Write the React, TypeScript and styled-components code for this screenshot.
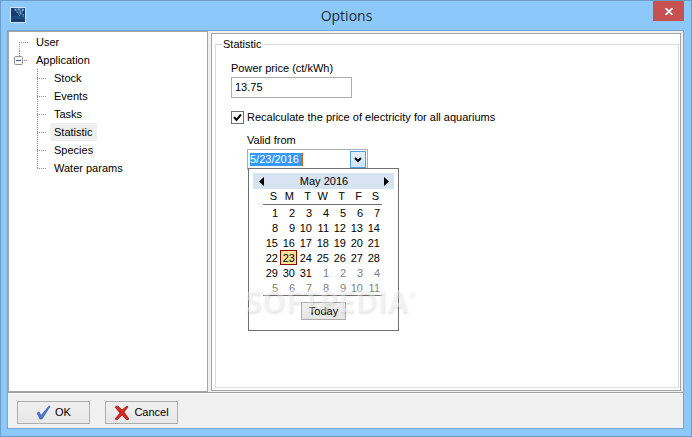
import React from "react";
import styled, { createGlobalStyle } from "styled-components";

const GlobalStyle = createGlobalStyle`
  * { box-sizing: border-box; }
  body { margin: 0; font-family: "Liberation Sans", Arial, sans-serif; font-size: 11px; line-height: 15px; color: #000; }
  button, input { font: inherit; color: inherit; }
`;

const Window = styled.div`
  display: flex;
  flex-direction: column;
  min-height: 100vh;
  padding: 0 7px 7px 6px;
  border: 1px solid #6c9cc8;
  background: #8cc8fa;
`;

const TitleBar = styled.header`
  display: flex;
  align-items: flex-start;
  height: 29px;
  padding-left: 3px;
`;

const AppIcon = styled.svg`
  flex: none;
  margin-top: 6px;
`;

const Title = styled.h1`
  flex: 1;
  margin: 5px 0 0 0;
  padding-left: 14px;
  text-align: center;
  color: #1c2833;
  font: 14px/20px "Open Sans", sans-serif;
`;

const CloseButton = styled.button`
  display: grid;
  place-items: center;
  width: 31px;
  height: 20px;
  padding: 0;
  border: 0;
  background: #c75050;
`;

const Client = styled.main`
  flex: 1;
  display: flex;
  flex-direction: column;
  border: 1px solid #78a6d4;
  background: #f0f0f0;
`;

const Panels = styled.div`
  flex: 1;
  display: flex;
  gap: 3px;
  border-bottom: 1px solid #a0a0a0;
`;

const TreePanel = styled.nav`
  flex: 0 0 200px;
  padding: 1px 0 0 5px;
  border: 1px solid #a5a5a5;
  background: #fff;
`;

const Tree = styled.ul`
  margin: 0;
  padding: 0;
  list-style: none;
`;

const SubTree = styled(Tree)`
  padding-left: 23px;
`;

const Node = styled.li``;

const NodeRow = styled.div`
  display: flex;
  align-items: center;
  height: 18px;
`;

const Lines = styled.svg`
  flex: none;
`;

const NodeLabel = styled.button<{ $selected?: boolean }>`
  height: 18px;
  padding: 0 4px;
  border: 0;
  background: ${(p) => (p.$selected ? "#f0f0f0" : "transparent")};
  line-height: 18px;
`;

const Content = styled.section`
  flex: 1;
  margin: 2px 2px 1px 0;
  padding: 3px 1px 2px 3px;
  display: flex;
  border: 1px solid #a5a5a5;
  background: #fff;
`;

const Group = styled.fieldset`
  flex: 1;
  min-width: 0;
  margin: 0;
  padding: 9px 15px 0;
  border: 1px solid #dcdcdc;
`;

const GroupTitle = styled.legend`
  margin-left: -8px;
  padding: 0;
`;

const Field = styled.div<{ $indent?: boolean }>`
  position: relative;
  display: flex;
  flex-direction: column;
  align-items: flex-start;
  gap: 1px;
  margin-left: ${(p) => (p.$indent ? "16px" : "0")};
`;

const TextInput = styled.input`
  width: 121px;
  height: 21px;
  padding: 0 3px 2px;
  border: 1px solid #abadb3;
  background: #fff;
`;

const CheckRow = styled.label`
  display: flex;
  align-items: center;
  gap: 3px;
  margin: 12px 0 8px;
`;

const CheckWrap = styled.span`
  position: relative;
  display: flex;
`;

const CheckBox = styled.input`
  appearance: none;
  width: 13px;
  height: 13px;
  margin: 0;
  border: 1px solid #707070;
  background: #fff;
`;

const CheckMark = styled.svg`
  position: absolute;
  inset: 0;
  pointer-events: none;
  display: none;
  ${CheckBox}:checked + & { display: block; }
`;

const DateBox = styled.div`
  display: flex;
  align-items: center;
  justify-content: space-between;
  width: 121px;
  height: 21px;
  padding: 0 1px 0 2px;
  border: 1px solid #abadb3;
  background: #fff;
`;

const DateInput = styled.input`
  width: 53px;
  height: 13px;
  padding: 0;
  border: 0;
  border-right: 1px solid #cc6600;
  background: #3399ff;
  color: #fff;
`;

const DropButton = styled.button`
  display: grid;
  place-items: center;
  width: 16px;
  height: 17px;
  padding: 0;
  border: 1px solid #569de5;
  background: linear-gradient(#e5f1fc, #cce4fc);
`;

const Calendar = styled.div`
  position: absolute;
  top: 35px;
  left: 1px;
  display: flex;
  flex-direction: column;
  align-items: center;
  width: 151px;
  padding: 4px 4px 10px;
  border: 1px solid #707070;
  background: #fff;
`;

const MonthBar = styled.div`
  display: flex;
  align-items: center;
  justify-content: space-between;
  width: 100%;
  height: 16px;
  padding: 0 5px 0 6px;
  background: #d8e3f1;
`;

const ArrowButton = styled.button`
  display: flex;
  padding: 0;
  border: 0;
  background: none;
`;

const Days = styled.table`
  border-collapse: separate;
  border-spacing: 0;
  table-layout: fixed;
  width: 119px;
  margin-right: 2px;
  border-bottom: 1px solid #707070;
`;

const Weekday = styled.th`
  height: 16px;
  padding: 0 3px 0 0;
  border-bottom: 1px solid #707070;
  font-weight: 400;
  text-align: right;
`;

const Day = styled.td<{ $muted?: boolean; $today?: boolean }>`
  height: 15px;
  padding: ${(p) => (p.$today ? "2px 1px 0 0" : "2px 2px 0 0")};
  border: ${(p) => (p.$today ? "1px solid #8b0000" : "0")};
  background: ${(p) => (p.$today ? "#ffe295" : "transparent")};
  color: ${(p) => (p.$muted ? "#808080" : "#000")};
  line-height: ${(p) => (p.$today ? "11px" : "13px")};
  text-align: right;
`;

const TodayButton = styled.button`
  width: 45px;
  height: 18px;
  margin-top: 6px;
  padding: 0;
  border: 1px solid #acacac;
  background: linear-gradient(#f0f0f0, #e5e5e5);
`;

const Watermark = styled.div`
  position: absolute;
  top: 114px;
  left: -4px;
  color: rgba(255, 255, 255, 0.4);
  font: 700 30px/36px "Open Sans", sans-serif;
  text-shadow: 1px 2px 2px rgba(0, 0, 0, 0.09);
  pointer-events: none;
`;

const Registered = styled.sup`
  font-size: 9px;
  line-height: 9px;
  vertical-align: 15px;
`;

const Footer = styled.footer`
  display: flex;
  gap: 15px;
  padding: 7px 9px 4px;
  border-top: 1px solid #fff;
`;

const ActionButton = styled.button`
  display: flex;
  align-items: center;
  justify-content: center;
  gap: 4px;
  width: 73px;
  height: 23px;
  padding: 0;
  border: 1px solid #acacac;
  background: linear-gradient(#f0f0f0, #e7e7e7);
`;

const pages = ["Stock", "Events", "Tasks", "Statistic", "Species", "Water params"];
const weekdays = ["S", "M", "T", "W", "T", "F", "S"];
const weeks = Array.from({ length: 6 }, (_, w) =>
  Array.from({ length: 7 }, (_, d) => w * 7 + d + 1)
);

function Arrow({ left }: { left?: boolean }) {
  return (
    <svg width="5" height="9" viewBox="0 0 5 9">
      <path d={left ? "M5 0v9L0 4.500z" : "M0 0v9l5-4.500z"} />
    </svg>
  );
}

export default function App() {
  return (
    <>
      <GlobalStyle />
      <Window>
        <TitleBar>
          <AppIcon width="16" height="16" viewBox="0 0 16 16">
            <path fill="#d0e4f7" d="M0 0h16v16H0z" />
            <path fill="#153e70" d="M1 1h14v14H1z" />
            <path fill="#1c4b82" d="M1 9h14v3H1z" />
            <path fill="#3a6798" d="M4 1h10v3H4zM6 4h7v2H6zM8 6h4v2H8zM12 7h2v3h-2z" />
            <path fill="#6f98c4" d="M5 2h1v2H5zM8 1h2v2H8zM12 2h2v2h-2zM7 5h1v1H7zM10 4h1v3h-1zM9 8h1v1H9zM13 7h1v1h-1z" />
          </AppIcon>
          <Title>Options</Title>
          <CloseButton aria-label="Close">
            <svg width="8" height="7" viewBox="0 0 8 7">
              <path d="M.5 0l7 7M7.500 0l-7 7" stroke="#fff" strokeWidth="1.700" />
            </svg>
          </CloseButton>
        </TitleBar>
        <Client>
          <Panels>
            <TreePanel aria-label="Option pages">
              <Tree>
                <Node>
                  <NodeRow>
                    <Lines width="18" height="18">
                      <path d="M5.500 9v9M5 9.500h9" stroke="#909090" strokeDasharray="1 1" fill="none" />
                    </Lines>
                    <NodeLabel>User</NodeLabel>
                  </NodeRow>
                </Node>
                <Node>
                  <NodeRow>
                    <Lines width="18" height="18">
                      <path d="M5.500 0v5M10 9.500h4" stroke="#909090" strokeDasharray="1 1" />
                      <rect x=".5" y="5.500" width="8" height="8" rx="1" fill="#f8f8f8" stroke="#919191" />
                      <path d="M2 9.500h5" stroke="#3b5fb5" />
                    </Lines>
                    <NodeLabel>Application</NodeLabel>
                  </NodeRow>
                  <SubTree>
                    {pages.map((page, i) => (
                      <Node key={page}>
                        <NodeRow>
                          <Lines width="13" height="18">
                            <path
                              d={i === pages.length - 1 ? "M.5 0v10M0 9.500h9" : "M.5 0v18M0 9.500h9"}
                              stroke="#909090"
                              strokeDasharray="1 1"
                              fill="none"
                            />
                          </Lines>
                          <NodeLabel $selected={page === "Statistic"}>{page}</NodeLabel>
                        </NodeRow>
                      </Node>
                    ))}
                  </SubTree>
                </Node>
              </Tree>
            </TreePanel>
            <Content>
              <Group>
                <GroupTitle>Statistic</GroupTitle>
                <Field>
                  <label htmlFor="price">Power price (ct/kWh)</label>
                  <TextInput id="price" defaultValue="13.75" />
                </Field>
                <CheckRow>
                  <CheckWrap>
                    <CheckBox type="checkbox" defaultChecked />
                    <CheckMark width="13" height="13" viewBox="0 0 13 13">
                      <path d="M3 6l2.500 3L10 3.500" fill="none" stroke="#000" strokeWidth="2" />
                    </CheckMark>
                  </CheckWrap>
                  Recalculate the price of electricity for all aquariums
                </CheckRow>
                <Field $indent>
                  <label htmlFor="valid">Valid from</label>
                  <DateBox>
                    <DateInput id="valid" defaultValue="5/23/2016" />
                    <DropButton aria-label="Open calendar">
                      <svg width="8" height="6" viewBox="0 0 8 6">
                        <path d="M1 1l3 3 3-3" fill="none" stroke="#000" strokeWidth="2" />
                      </svg>
                    </DropButton>
                  </DateBox>
                  <Calendar>
                    <MonthBar>
                      <ArrowButton aria-label="Previous month"><Arrow left /></ArrowButton>
                      May 2016
                      <ArrowButton aria-label="Next month"><Arrow /></ArrowButton>
                    </MonthBar>
                    <Days>
                      <thead>
                        <tr>{weekdays.map((d, i) => <Weekday key={i}>{d}</Weekday>)}</tr>
                      </thead>
                      <tbody>
                        {weeks.map((week) => (
                          <tr key={week[0]}>
                            {week.map((n) => (
                              <Day key={n} $muted={n > 31} $today={n === 23}>{n > 31 ? n - 31 : n}</Day>
                            ))}
                          </tr>
                        ))}
                      </tbody>
                    </Days>
                    <TodayButton>Today</TodayButton>
                    <Watermark>SOFTPEDIA<Registered>®</Registered></Watermark>
                  </Calendar>
                </Field>
              </Group>
            </Content>
          </Panels>
          <Footer>
            <ActionButton>
              <svg width="15" height="15" viewBox="0 0 15 15">
                <path d="M1 8l2-1 2 3.500L13 1l1 .5L6 14H4z" fill="#4a76d4" stroke="#2c50a8" strokeWidth=".6" />
              </svg>
              OK
            </ActionButton>
            <ActionButton>
              <svg width="16" height="16" viewBox="0 0 16 16">
                <path d="M1 2l3-1 4 4 5-4 1 1-4 5 5 7-2 1-5-5-5 5-2-1 5-6z" fill="#d8281c" stroke="#9c140e" strokeWidth=".7" />
              </svg>
              Cancel
            </ActionButton>
          </Footer>
        </Client>
      </Window>
    </>
  );
}
